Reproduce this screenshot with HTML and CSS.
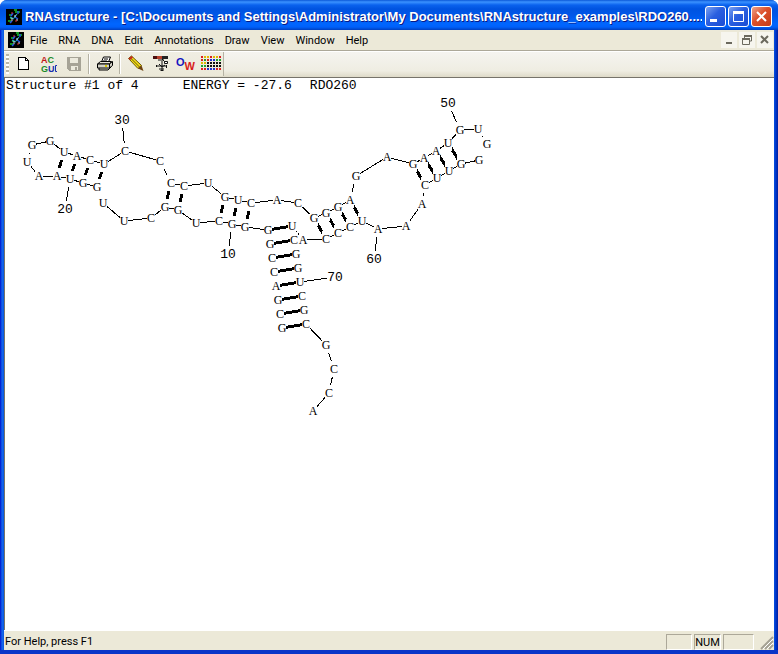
FILE: index.html
```html
<!DOCTYPE html>
<html lang="en">
<head>
<meta charset="utf-8">
<title>RNAstructure</title>
<link rel="stylesheet" href="styles.css">
</head>
<body>
<svg class="defs" aria-hidden="true">
  <symbol id="helix" viewBox="0 0 16 16">
    <rect width="16" height="16" fill="#000"/>
    <path d="M8 1h3M9 3h5M3 6h3M4 9h2M2 12h3" stroke="#16c22c" stroke-width="1.3"/>
    <path d="M12 2v3M7 4l-2 3M9 8l3 2M6 12l-2 2" stroke="#2456e8" stroke-width="1.5"/>
    <path d="M11 5l-3 4M4 8l4 2" stroke="#28a8c0" stroke-width="1.2"/>
    <path d="M8 7h2M10 11h2M6 9v3" stroke="#d8dce8"/>
    <path d="M5 4h2M9 12h2" stroke="#d82a2a"/>
  </symbol>
</svg>
<div class="window">
  <header class="titlebar">
    <svg class="app-icon" aria-hidden="true"><use href="#helix"/></svg>
    <h1 class="title">RNAstructure - [C:\Documents and Settings\Administrator\My Documents\RNAstructure_examples\RDO260....</h1>
    <div class="caption-buttons">
      <button class="caption" aria-label="Minimize"><svg width="19" height="19"><path d="M4 13.500h7" stroke="#fff" stroke-width="3"/></svg></button>
      <button class="caption" aria-label="Maximize"><svg width="19" height="19"><path d="M4.500 5.500h10v9h-10z" fill="none" stroke="#fff"/><path d="M4 5.500h11" stroke="#fff" stroke-width="3"/></svg></button>
      <button class="caption close" aria-label="Close"><svg width="19" height="19"><path d="M5 5l9 9M14 5l-9 9" stroke="#fff" stroke-width="2"/></svg></button>
    </div>
  </header>
  <nav class="menubar">
    <svg class="app-icon" aria-hidden="true"><use href="#helix"/></svg>
    <button class="menu">File</button>
    <button class="menu">RNA</button>
    <button class="menu">DNA</button>
    <button class="menu">Edit</button>
    <button class="menu">Annotations</button>
    <button class="menu">Draw</button>
    <button class="menu">View</button>
    <button class="menu">Window</button>
    <button class="menu">Help</button>
    <div class="child-buttons">
      <button class="child" aria-label="Minimize document"><svg width="16" height="16"><path d="M5 11h6" stroke="#6b695e" stroke-width="2"/></svg></button>
      <button class="child" aria-label="Restore document"><svg width="16" height="16"><path d="M5 4h8M3 7h8" stroke="#6b695e" stroke-width="2"/><path d="M12.500 4v5h-2M3.500 7v5.500h7V7M5.500 4v2" fill="none" stroke="#6b695e"/></svg></button>
      <button class="child" aria-label="Close document"><svg width="16" height="16"><path d="M4 4l7 7M11 4l-7 7" stroke="#6b695e" stroke-width="2"/></svg></button>
    </div>
  </nav>
  <div class="toolbar">
    <div class="tools">
      <span class="grip"></span>
      <button class="tool" aria-label="New"><svg width="16" height="16" shape-rendering="crispEdges"><path d="M2.500 1.500h7l3 3v9h-10z" fill="#fff" stroke="#000"/><path d="M9.500 1.500v3h3" fill="none" stroke="#000"/></svg></button>
      <button class="tool" aria-label="Open sequence"><svg class="glyphs" width="18" height="18"><text x="1" y="8"><tspan fill="#c01818">A</tspan><tspan fill="#1a8a28">C</tspan></text><text x="1" y="17"><tspan fill="#1a8a28">G</tspan><tspan fill="#1c2cae">U</tspan></text><path d="M17 10.500h-1.500v6H17" fill="none" stroke="#1c2cae"/></svg></button>
      <button class="tool" aria-label="Save" disabled><svg width="16" height="16" shape-rendering="crispEdges"><path d="M1 1h14v14H3l-2-2z" fill="#a6a396"/><path d="M4 2h8v5H4zM5 10h7v4H5z" fill="#eceadd"/><path d="M9 11h2v3H9z" fill="#a6a396"/></svg></button>
      <span class="separator"></span>
      <button class="tool" aria-label="Print"><svg width="18" height="16"><path d="M5.500 6l2-5h7l-2 5" fill="#fff" stroke="#000"/><path d="M8 3h4M7 5h4" stroke="#000"/><path d="M1.500 8l3-2.500h11l-2 2.500z" fill="#e8e6da" stroke="#000"/><path d="M1.500 8h12v4h-12zM13.500 8l3-2.500v4l-3 2.500M3 12v2h9l3-3" fill="#d2d0c4" stroke="#000"/><path d="M9 10h2" stroke="#d8c800" stroke-width="2"/></svg></button>
      <span class="separator"></span>
      <button class="tool" aria-label="Draw"><svg width="18" height="18"><path d="M1.500 3.500l3-2.500 10 9.500-3.500 3z" fill="#f2dc1c" stroke="#6a5600"/><path d="M3 2.500l10 10" stroke="#6a5600"/><path d="M1.500 3.500l3-2.500 1.500 1.500-3 2.500z" fill="#c52a20"/><path d="M14.500 10.500l2 5.500-5.500-2.500z" fill="#6e4210"/></svg></button>
      <button class="tool" aria-label="Fold"><svg width="18" height="18"><path d="M1 2.500h4" stroke="#4a1010" stroke-width="3"/><path d="M5 2.500h5" stroke="#b8402c" stroke-width="3"/><path d="M10 2.500h6" stroke="#222" stroke-width="3"/><path d="M6 5h6M10 4l3 3M10 6v10M5 11h9M7 9l3 3M10 12l3-2M7 14h5" fill="none" stroke="#111"/><path d="M12.500 6.500h3v2h-3zM4.500 10v2M14.500 10v3M8.500 15.500h3" fill="#fff" stroke="#111"/></svg></button>
      <button class="tool" aria-label="OligoWalk"><svg class="oligo" width="20" height="18"><text x="0" y="11"><tspan fill="#1414c0">O</tspan><tspan dy="4" fill="#d81a1a">W</tspan></text></svg></button>
      <button class="tool" aria-label="Dot plot"><svg width="20" height="17" shape-rendering="crispEdges"><g stroke-width="2" stroke-dasharray="2 1"><path d="M0 1h3M9 1h3M18 1h2" stroke="#d82020"/><path d="M3 1h6M12 1h6" stroke="#e0b800"/><path d="M0 4h3M6 4h3" stroke="#d82020"/><path d="M3 4h3M15 4h5" stroke="#20a030"/><path d="M9 4h6" stroke="#2030d0"/><path d="M0 7h6" stroke="#e0b800"/><path d="M6 7h14" stroke="#111"/><path d="M0 10h6" stroke="#20a030"/><path d="M6 10h14" stroke="#111"/><path d="M0 13h6M15 13h5" stroke="#d82020"/><path d="M6 13h9" stroke="#2030d0"/></g></svg></button>
    </div>
  </div>
  <main class="document">
    <p class="summary"><span>Structure #1 of 4</span><span>ENERGY = -27.6</span><span>RDO260</span></p>
    <svg id="structure" class="structure" width="500" height="334" viewBox="5 94 500 334" role="img" aria-label="Predicted secondary structure"></svg>
  </main>
  <footer class="statusbar">
    <span class="hint">For Help, press F1</span>
    <span class="pane narrow"></span>
    <span class="pane">NUM</span>
    <span class="pane wide"></span>
    <svg class="resize" width="14" height="16" aria-hidden="true"><path d="M1 15L13 3M5 15l8-8M9 15l4-4" stroke="#a5a294" stroke-width="2"/><path d="M3 15L13 5M7 15l6-6" stroke="#fff"/></svg>
  </footer>
</div>
<script src="script.js"></script>
</body>
</html>
```
FILE: styles.css
```css
* { box-sizing: border-box; }

body {
  margin: 0;
  background: #fff;
  color: #000;
  font-family: Roboto, "Liberation Sans", sans-serif;
  font-size: 11px;
}

button {
  margin: 0;
  padding: 0;
  border: 0;
  background: none;
  color: inherit;
  font: inherit;
}

.defs { position: absolute; width: 0; height: 0; }

.window {
  display: flex;
  flex-direction: column;
  height: 100vh;
  padding: 0 4px 4px;
  border-radius: 7px 7px 0 0;
  background: linear-gradient(to right, #0019cf 0, #0831d9 1px, #166aee 2px, #0855dd 4px, #0855dd calc(100% - 4px), #0040d8 calc(100% - 3px), #001ea0 100%);
  box-shadow: inset 0 -4px #0a35c8, inset 0 -1px #00138c;
}

.titlebar {
  display: flex;
  align-items: center;
  gap: 3px;
  flex: none;
  height: 30px;
  margin: 0 -4px;
  padding: 3px 6px 0;
  border-radius: 7px 7px 0 0;
  background: linear-gradient(#0b58d8 0, #3b92ff 2px, #0a62ee 5px, #0053e0 9px, #0058ea 16px, #0066ff 24px, #0060fa 27px, #0040c0 30px);
}

.app-icon { flex: none; width: 16px; height: 16px; }

.title {
  flex: 1;
  margin: 0;
  overflow: hidden;
  white-space: nowrap;
  color: #fff;
  font-family: "Liberation Sans", sans-serif;
  font-size: 13px;
  line-height: 18px;
  font-weight: 700;
  text-shadow: 1px 1px #0a1883;
}

.caption-buttons { display: flex; gap: 2px; }

.caption {
  width: 21px;
  height: 21px;
  border: 1px solid #fff;
  border-radius: 3px;
  background: linear-gradient(135deg, #7ba2f0, #2a5fe0 45%, #1a4cd4);
}

.caption.close { background: linear-gradient(135deg, #eda48c, #dc4f2a 45%, #c43c18); }

.caption svg, .child svg, .tool svg { display: block; margin: auto; }

.menubar {
  display: flex;
  align-items: center;
  flex: none;
  height: 21px;
  padding: 0 1px 0 4px;
  border-bottom: 1px solid #aca899;
  background: #ece9d8;
}

.menu { height: 18px; padding: 0 5px 0 6px; }

.child-buttons { display: flex; gap: 2px; margin-left: auto; }

.child {
  width: 16px;
  height: 16px;
  background: #f6f5ee;
}

.toolbar {
  flex: none;
  height: 27px;
  border-top: 1px solid #fff;
  border-bottom: 1px solid #76736a;
  background: linear-gradient(#f5f4f0, #efede2 75%, #dedac8);
}

.tools {
  display: flex;
  align-items: center;
  width: max-content;
  height: 24px;
  border-right: 1px solid #b5b2a4;
  background: linear-gradient(#f0eee3, #ebe8d8);
}

.grip {
  width: 3px;
  height: 20px;
  margin: 0 2px;
  background: repeating-linear-gradient(#b8b5a6 0 2px, #fff 2px 4px);
}

.tool { width: 25px; height: 24px; }

.separator {
  width: 2px;
  height: 20px;
  margin: 0 2px;
  border-left: 1px solid #b5b2a4;
  border-right: 1px solid #fff;
}

.glyphs { font: 700 9px "Liberation Sans", sans-serif; }
.oligo { font: 700 11px "Liberation Sans", sans-serif; }

.document {
  flex: 1;
  min-height: 0;
  overflow: hidden;
  border-left: 1px solid #76736a;
  background: #fff;
}

.summary {
  display: flex;
  margin: 0;
  padding-left: 1px;
  font-family: "Liberation Mono", monospace;
  font-size: 13px;
  line-height: 16px;
}

.summary span + span { margin-left: 18px; }
.summary span:nth-child(2) { margin-left: 44px; }

.structure { display: block; }
.link { stroke: #000; stroke-width: 1; }
.pair { stroke: #000; stroke-width: 3; }
.clear { fill: #fff; }
.base { font: 12px "Liberation Serif", serif; text-anchor: middle; }
.number { font: 13px "Liberation Mono", monospace; text-anchor: middle; }

.statusbar {
  display: flex;
  align-items: center;
  gap: 2px;
  flex: none;
  height: 20px;
  padding: 2px 0 0 1px;
  border-top: 1px solid #fff;
  background: #ece9d8;
}

.hint { flex: 1; }

.pane {
  width: 27px;
  height: 16px;
  border: 1px solid;
  border-color: #aca899 #fff #fff #aca899;
  line-height: 15px;
  text-align: center;
}

.pane.narrow { width: 26px; }
.pane.wide { width: 31px; }
.resize { margin-left: 4px; }
```
FILE: script.js
```js
// Bases in 5' to 3' order: letter, x, y of the centre.
const bases = [
  ["G", 282, 328], ["C", 280, 314], ["G", 278, 300], ["A", 276, 286], ["C", 274, 272],
  ["C", 272, 258], ["G", 270, 244], ["G", 268, 230], ["G", 245, 227], ["G", 232, 224],
  ["C", 219, 221], ["U", 196, 223], ["G", 178, 210], ["G", 165, 207], ["C", 151, 218],
  ["U", 124, 221], ["U", 103, 203], ["G", 97, 187], ["G", 83, 183], ["U", 70, 179],
  ["A", 57, 176], ["A", 39, 176], ["U", 27, 162], ["G", 32, 145], ["G", 50, 141],
  ["U", 64, 152], ["A", 77, 156], ["C", 90, 160], ["U", 104, 164], ["C", 125, 151],
  ["C", 160, 161], ["C", 171, 183], ["C", 184, 186], ["U", 208, 183], ["G", 225, 197],
  ["U", 238, 200], ["C", 251, 203], ["A", 277, 200], ["C", 298, 203], ["G", 314, 218],
  ["G", 326, 213], ["G", 338, 207], ["A", 350, 200], ["G", 356, 176], ["A", 387, 157],
  ["G", 413, 164], ["A", 424, 158], ["A", 436, 151], ["U", 448, 143], ["G", 460, 130],
  ["U", 478, 129], ["G", 487, 144], ["G", 479, 160], ["G", 461, 164], ["U", 449, 171],
  ["U", 437, 178], ["C", 425, 185], ["A", 422, 204], ["A", 406, 226], ["A", 378, 229],
  ["U", 362, 221], ["C", 350, 227], ["C", 338, 233], ["C", 326, 239], ["A", 303, 240],
  ["U", 292, 226], ["C", 294, 240], ["G", 296, 254], ["G", 298, 268], ["U", 300, 282],
  ["C", 302, 296], ["G", 304, 310], ["C", 306, 324], ["G", 326, 345], ["C", 334, 369],
  ["C", 329, 393], ["A", 313, 411]
];

// Helices: first base, its partner, number of stacked pairs (1-based).
const helices = [[1, 73, 8], [9, 37, 3], [13, 33, 2], [18, 29, 4], [40, 64, 4], [46, 57, 4]];

// Position labels: number, base index, x, y of the centre.
const numbers = [
  [10, 10, 228, 254], [20, 20, 65, 209], [30, 30, 122, 120],
  [50, 50, 448, 103], [60, 60, 374, 259], [70, 70, 335, 277]
];

const svg = document.getElementById("structure");

function add(tag, attrs, text) {
  const el = document.createElementNS("http://www.w3.org/2000/svg", tag);
  for (const key in attrs) el.setAttribute(key, attrs[key]);
  if (text !== undefined) el.textContent = text;
  svg.appendChild(el);
}

function line(cls, x1, y1, x2, y2) {
  add("line", { class: cls, x1, y1, x2, y2, "shape-rendering": "crispEdges" });
}

for (let i = 1; i < bases.length; i++) {
  line("link", bases[i - 1][1], bases[i - 1][2], bases[i][1], bases[i][2]);
}
for (const [first, partner, count] of helices) {
  for (let k = 0; k < count; k++) {
    const a = bases[first - 1 + k];
    const b = bases[partner - 1 - k];
    line("pair", a[1], a[2], b[1], b[2]);
  }
}
for (const [, at, x, y] of numbers) {
  line("link", bases[at - 1][1], bases[at - 1][2], x, y);
}

// Clear the area behind each label so lines stop short of the text.
for (const [, x, y] of bases) add("rect", { class: "clear", x: x - 4, y: y - 8, width: 8, height: 16 });
for (const [, , x, y] of numbers) add("rect", { class: "clear", x: x - 8, y: y - 8, width: 16, height: 16 });
for (const [letter, x, y] of bases) add("text", { class: "base", x, y: y + 4 }, letter);
for (const [value, , x, y] of numbers) add("text", { class: "number", x, y: y + 4 }, value);
```
